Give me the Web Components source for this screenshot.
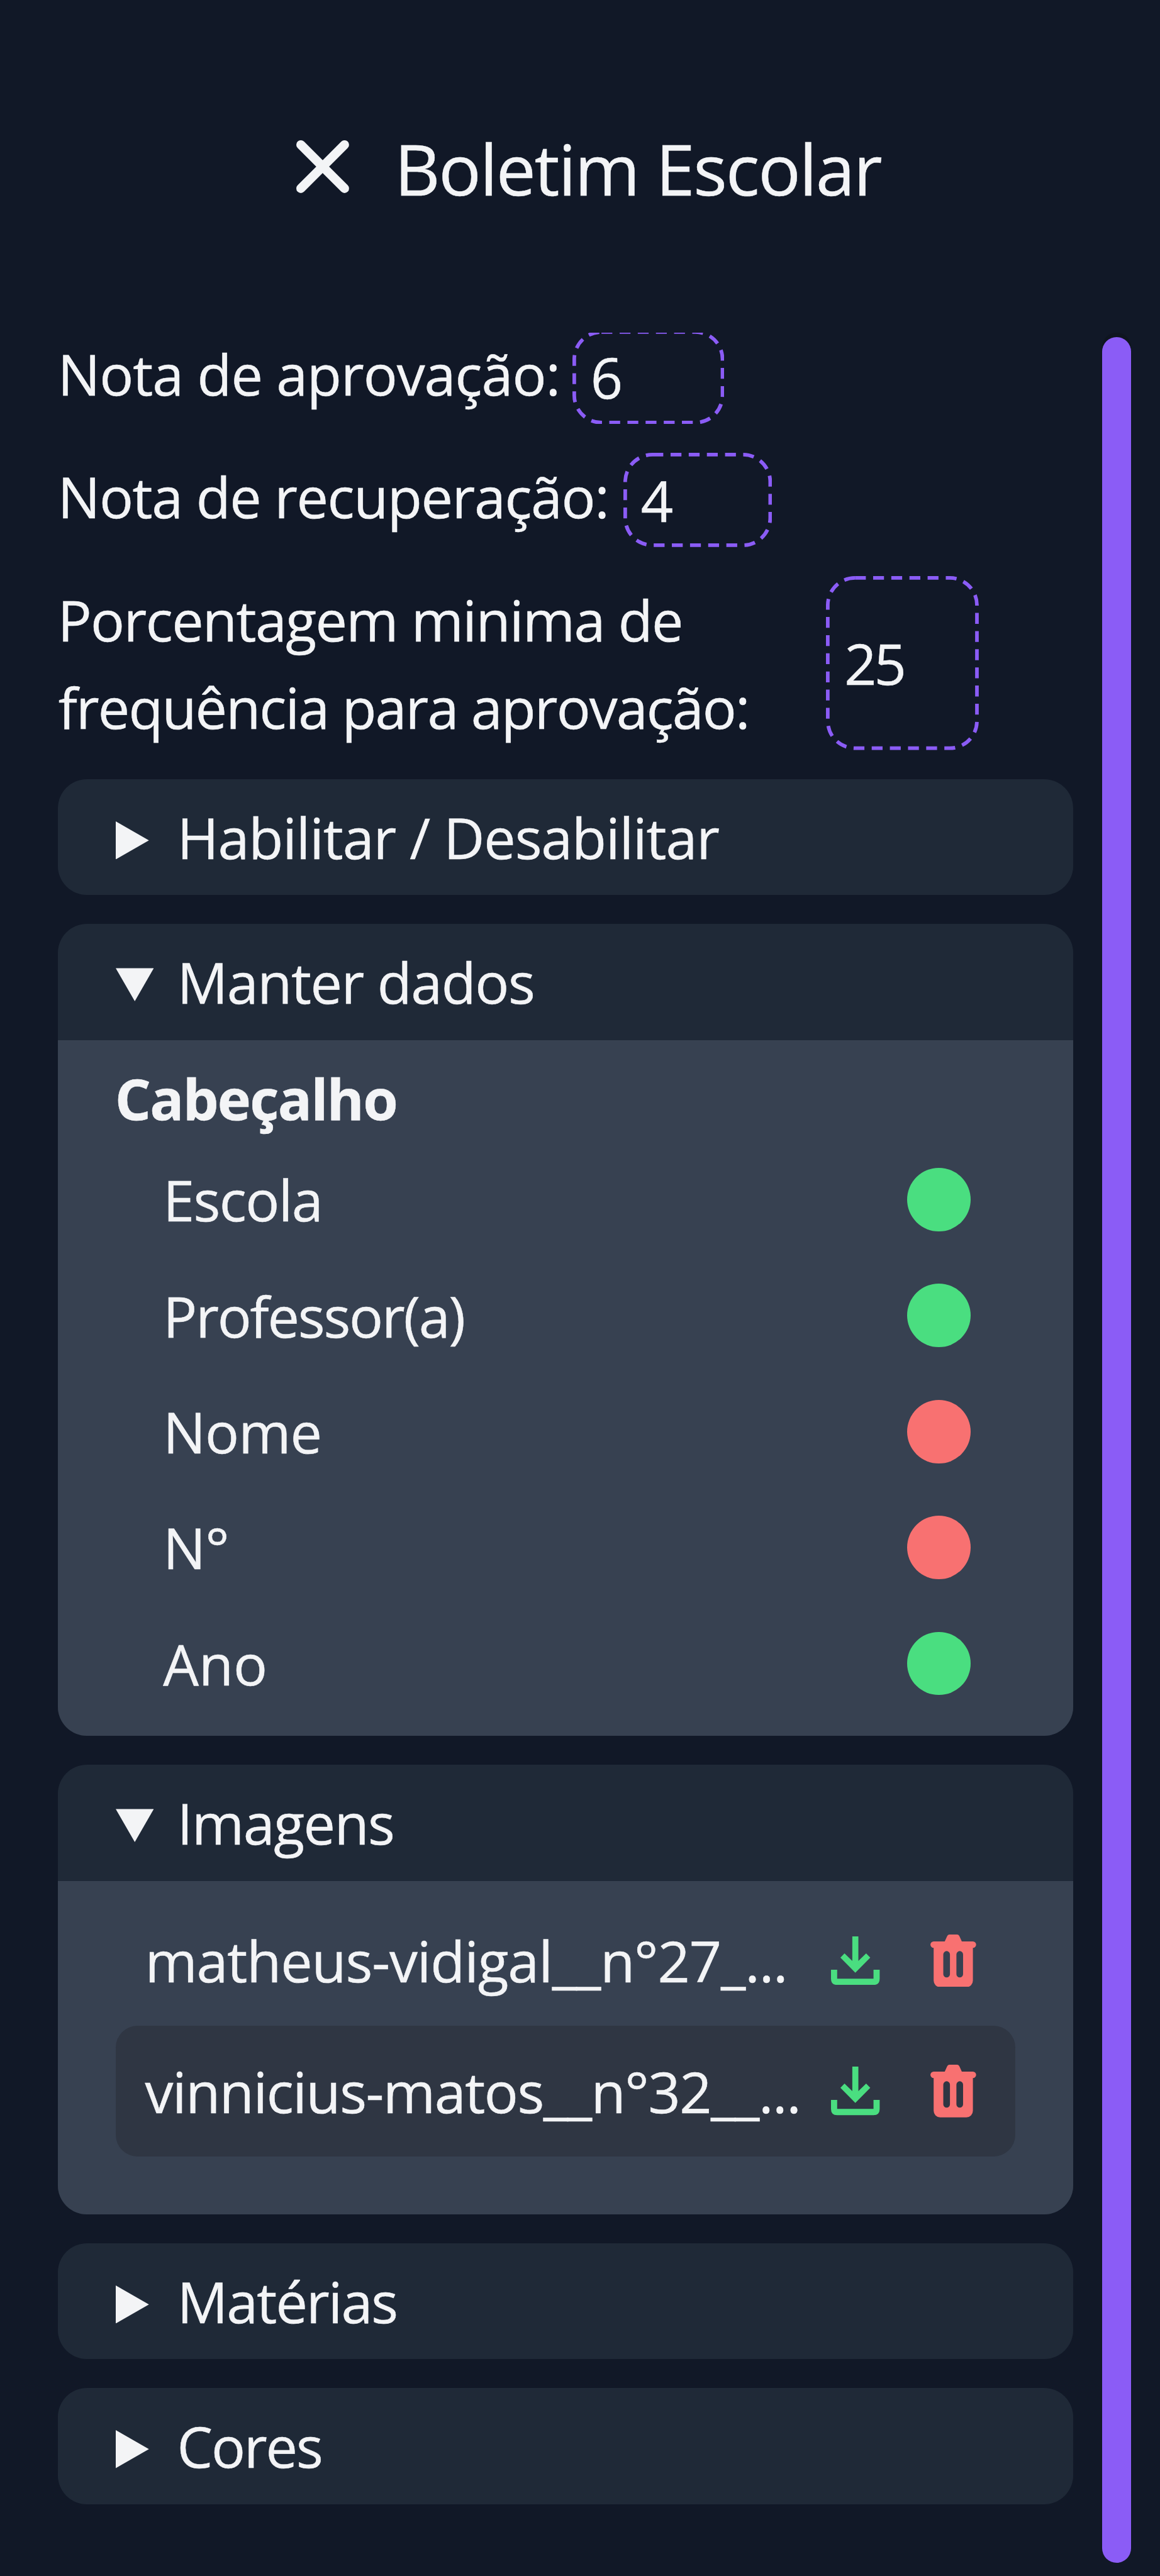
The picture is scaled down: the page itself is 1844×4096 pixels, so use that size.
<!DOCTYPE html>
<html lang="pt-BR">
<head>
<meta charset="utf-8">
<title>Boletim Escolar</title>
<style>
  /* 1rem is one layout unit; the page is 320 units wide */
  html { font-size: 5.7625px; background: #111827; }
  body { margin: 0; }
</style>
</head>
<body>
<boletim-app>
  <page-header slot="header" style="--track:-2.26px">Boletim Escolar</page-header>

  <number-field value="6" style="--label:141.9rem;--box:41.9rem;--track:-1.04px">Nota de aprovação:</number-field>
  <number-field value="4" style="--label:156rem;--box:41rem;--inset:4.8rem;--track:-1.41px">Nota de recuperação:</number-field>
  <number-field value="25" style="--label:211.85rem;--box:42.15rem;--inset:5.1rem;--track:-1.6px;--value-track:-4.2px">Porcentagem minima de<br><span style="letter-spacing:-1.94px;margin-left:.2rem">frequência para aprovação:</span></number-field>

  <fold-card label="Habilitar / Desabilitar" style="--track:-1.15px"></fold-card>

  <fold-card label="Manter dados" open style="--track:-1.45px;--end:4rem">
    <section-title style="--track:-1.75px">Cabeçalho</section-title>
    <toggle-row on style="--track:-1.6px">Escola</toggle-row>
    <toggle-row on style="--track:-2.2px">Professor(a)</toggle-row>
    <toggle-row style="--track:-.9px">Nome</toggle-row>
    <toggle-row style="--track:-.7px">N°</toggle-row>
    <toggle-row on style="--track:-.1px">Ano</toggle-row>
  </fold-card>

  <fold-card label="Imagens" open style="--track:-1.5px;--end:16rem">
    <file-row style="--track:-1.14px">matheus-vidigal__n°27_...</file-row>
    <file-row active style="--track:-1.46px">vinnicius-matos__n°32__...</file-row>
  </fold-card>

  <fold-card label="Matérias" style="--track:-1.96px"></fold-card>
  <fold-card label="Cores" style="--track:-2.1px"></fold-card>
</boletim-app>

<script>
const define = (name, html, setup) => {
  const template = document.createElement('template');
  template.innerHTML = html;
  customElements.define(name, class extends HTMLElement {
    constructor() {
      super();
      this.attachShadow({ mode: 'open' }).append(template.content.cloneNode(true));
    }
    connectedCallback() { if (setup) setup(this, this.shadowRoot); }
  });
};

define('boletim-app', `
  <style>
    :host { display: flex; flex-direction: column; height: 4096px; overflow: hidden; background: #111827;
      color: #f3f4f6; font: 15.6rem/24rem "Open Sans", "Noto Sans", sans-serif; -webkit-text-stroke: .5px #f3f4f6; }
    .view { display: flex; flex: 1; min-height: 0; overflow: hidden; }
    main { width: 280rem; margin: -.83rem 8rem 0 16rem; display: flex; flex-direction: column; gap: 8rem; }
  </style>
  <slot name="header"></slot>
  <div class="view"><main><slot></slot></main><scroll-rail></scroll-rail></div>`);

define('scroll-rail', `
  <style>
    :host { display: flex; width: 8.1rem; height: 615.35rem; border-radius: 4rem; background: #0f1520; }
    div { flex: 1; margin-top: 1.1rem; border-radius: 4.05rem; background: #8b5cf6; }
  </style><div></div>`);

define('page-header', `
  <style>
    :host { display: flex; flex: none; box-sizing: border-box; height: 91.85rem; padding: 32rem 0 0 81.75rem; gap: 12.5rem;
      font-size: 19.5rem; line-height: 29rem; }
    svg { width: 14.56rem; height: 14.56rem; margin-top: 6.75rem; }
    h1 { margin: 0; font: inherit; letter-spacing: var(--track); white-space: nowrap; }
  </style>
  <svg viewBox="0 0 14.56 14.56" fill="none" stroke="#f3f4f6" stroke-width="2.5" stroke-linecap="round"><path d="M1.25 1.25 13.31 13.31M13.31 1.25 1.25 13.31"/></svg>
  <h1><slot></slot></h1>`);

define('number-field', `
  <style>
    :host { display: flex; }
    label { width: var(--label); margin-left: -.1rem; padding-right: .1rem; letter-spacing: var(--track); white-space: nowrap; }
    .box { display: grid; align-items: center; width: var(--box); min-height: 26rem; letter-spacing: var(--value-track, 0); }
    .box > * { grid-area: 1 / 1; }
    .box span { padding-left: var(--inset, 5rem); }
    svg { width: 100%; height: 100%; min-height: 0; align-self: stretch; contain: size; overflow: hidden; }
    rect { x: .5rem; y: .5rem; width: calc(100% - 1rem); height: calc(100% - 1rem); rx: 7.5rem;
      fill: none; stroke: #8b5cf6; stroke-width: 1rem; stroke-dasharray: 3rem 2.01rem; }
  </style>
  <label><slot></slot></label>
  <div class="box"><svg><rect/></svg><span></span></div>`,
  (host, root) => { root.querySelector('.box span').textContent = host.getAttribute('value'); });

define('fold-card', `
  <style>
    :host { display: block; border-radius: 8rem; overflow: hidden; background: #1f2937; }
    header { display: flex; height: 32rem; padding-left: 15.9rem; line-height: 32rem; letter-spacing: var(--track); }
    svg { width: 10.5rem; height: 10.5rem; margin: 11.6rem 6.45rem 0 0; fill: #f3f4f6; }
    .down { display: none; }
    :host([open]) .down { display: block; }
    :host([open]) .right { display: none; }
    .body { display: none; padding: 4rem 16rem var(--end); background: #374151; }
    :host([open]) .body { display: block; }
  </style>
  <header>
    <svg class="right" viewBox="0 0 10.5 10.5"><path d="M0 0 9.15 5.25 0 10.5z"/></svg>
    <svg class="down" viewBox="0 0 10.5 10.5"><path d="M0 .6H10.5L5.25 9.7z"/></svg>
    <span></span>
  </header>
  <div class="body"><slot></slot></div>`,
  (host, root) => { root.querySelector('span').textContent = host.getAttribute('label'); });

define('section-title', `
  <style>:host { display: block; margin-left: -.3rem; font-weight: 700; letter-spacing: var(--track); }</style><slot></slot>`);

define('toggle-row', `
  <style>
    :host { display: flex; align-items: center; justify-content: space-between; height: 32rem; padding: 0 12.2rem 0 13rem; letter-spacing: var(--track); }
    i { width: 17.5rem; height: 17.5rem; border-radius: 50%; background: #f87171; }
    :host([on]) i { background: #4ade80; }
  </style>
  <span><slot></slot></span><i></i>`);

define('file-row', `
  <style>
    :host { display: flex; align-items: center; height: 36rem; padding-left: 8rem; border-radius: 6rem; }
    :host([active]) { background: #2f3643; }
    span { width: 189.3rem; letter-spacing: var(--track); white-space: nowrap; }
    .get { width: 13.43rem; height: 13.4rem; fill: #4ade80; margin-right: 13.97rem; }
    .del { width: 12.63rem; height: 14.53rem; fill: #f87171; }
  </style>
  <span><slot></slot></span>
  <svg class="get" viewBox="0 0 13.43 13.4">
    <path d="M5.88 0H7.55V6.76L9.7 4.68 10.83 5.87 6.715 10.02 2.6 5.87 3.73 4.68 5.88 6.76z"/>
    <path d="M0 9.19H1.7V11.68H11.73V9.19H13.43V11.7Q13.43 13.4 11.73 13.4H1.7Q0 13.4 0 11.7z"/>
  </svg>
  <svg class="del" viewBox="0 0 12.63 14.53">
    <path fill-rule="evenodd" d="M.9 1.9H3.96L4.55 .6Q4.8 0 5.3 0H7.33Q7.83 0 8.08 .6L8.67 1.9H11.73A.89 .89 0 0 1 11.73 3.68V12.73A1.8 1.8 0 0 1 9.93 14.53H2.7A1.8 1.8 0 0 1 .9 12.73V3.68A.89 .89 0 0 1 .9 1.9zM4.48 4.57A.92 .92 0 0 0 3.56 5.49V10.94A.92 .92 0 0 0 5.4 10.94V5.49A.92 .92 0 0 0 4.48 4.57zM8.1 4.57A.92 .92 0 0 0 7.18 5.49V10.94A.92 .92 0 0 0 9.02 10.94V5.49A.92 .92 0 0 0 8.1 4.57z"/>
  </svg>`);
</script>
</body>
</html>
